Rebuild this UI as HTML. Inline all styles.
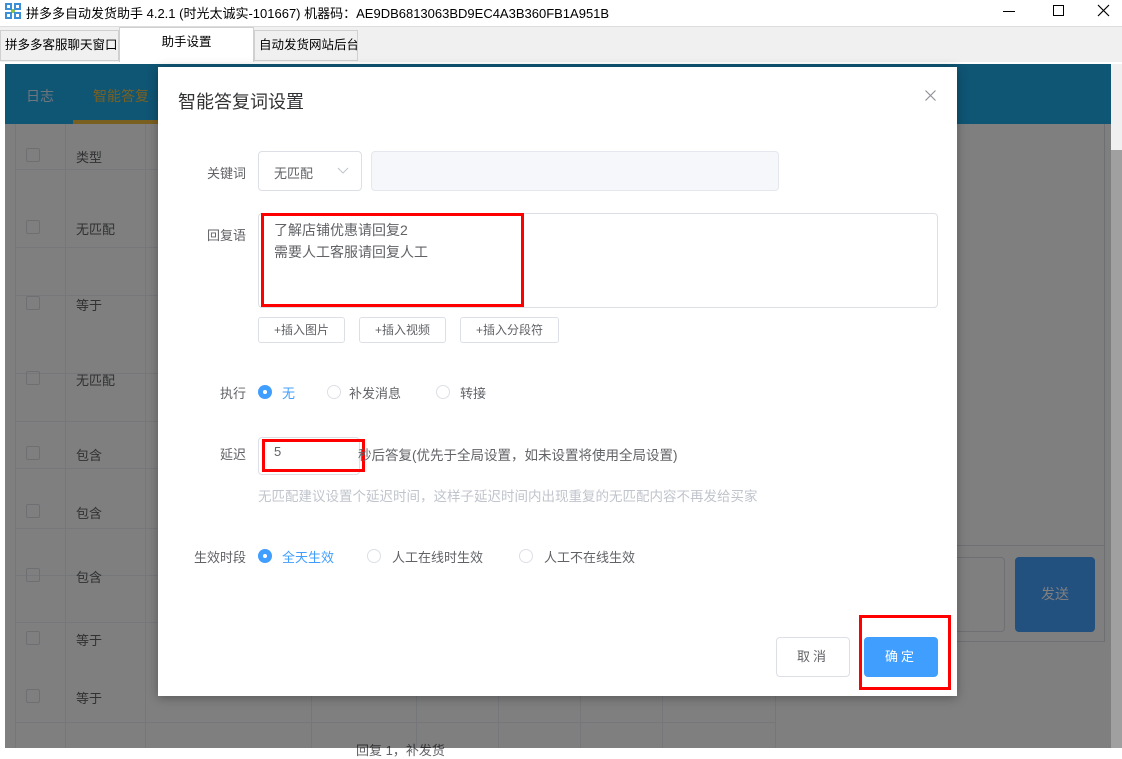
<!DOCTYPE html>
<html><head><meta charset="utf-8"><style>
*{margin:0;padding:0;box-sizing:border-box}
body{width:1122px;height:748px;overflow:hidden;position:relative;background:#fff;font-family:"Liberation Sans","Noto Sans CJK SC",sans-serif;font-size:13px;color:#606266}
.a{position:absolute}
.title{left:26px;top:3px;font-size:13px;color:#000}
.tab{top:30px;height:31px;border:1px solid #d0d0d0;background:#f0f0f0;font-size:12.5px;color:#000;line-height:29px;padding:0 4px;white-space:nowrap;overflow:hidden}
.vl{width:1px;background:#ebeef5;top:124px;height:624px}
.hl{height:1px;background:#ebeef5;left:15px;width:760px}
.cell{color:#606266;font-size:13px}
.cb{width:14px;height:14px;border:1px solid #dcdfe6;border-radius:2px;left:26px}
.lab{color:#606266;font-size:13px;text-align:right;width:88px;left:0}
.inp{border:1px solid #dcdfe6;border-radius:4px;background:#fff}
.btn{border:1px solid #dcdfe6;border-radius:3px;font-size:12px;color:#606266;text-align:center;line-height:24px;height:26px}
.rd{width:14px;height:14px;border:1px solid #dcdfe6;border-radius:50%}
.rdo{width:14px;height:14px;border-radius:50%;background:#409eff}
.rdo:after{content:"";position:absolute;left:5px;top:5px;width:4px;height:4px;background:#fff;border-radius:50%}
.red{border:3px solid #f00}
</style></head><body>
<svg class="a" style="left:5px;top:3px" width="16" height="16" viewBox="0 0 16 16"><g fill="none" stroke="#3a8fd8" stroke-width="2"><rect x="1" y="1" width="5" height="5"/><rect x="10" y="1" width="5" height="5"/><rect x="1" y="10" width="5" height="5"/><rect x="10" y="10" width="5" height="5"/></g><path d="M6 8h4M8 6v4" stroke="#8bc34a" stroke-width="2"/></svg>
<div class="a title">拼多多自动发货助手 4.2.1 (时光太诚实-101667) 机器码：AE9DB6813063BD9EC4A3B360FB1A951B</div>
<div class="a" style="left:1003px;top:11px;width:12px;height:1px;background:#000"></div>
<div class="a" style="left:1053px;top:5px;width:11px;height:11px;border:1px solid #000"></div>
<svg class="a" style="left:1097px;top:4px" width="13" height="13"><path d="M1 1L12 12M12 1L1 12" stroke="#000" stroke-width="1.2"/></svg>
<div class="a" style="left:0;top:26px;width:1122px;height:36px;background:#f0f0f0;border-top:1px solid #ddd"></div>
<div class="a tab" style="left:0;width:119px">拼多多客服聊天窗口</div>
<div class="a tab" style="left:119px;top:27px;height:35px;width:135px;background:#fff;border-bottom:none;text-align:center">助手设置</div>
<div class="a tab" style="left:254px;width:104px">自动发货网站后台</div>
<div class="a" style="left:5px;top:64px;width:1106px;height:60px;background:#1eaae8"></div>
<div class="a" style="left:1111px;top:64px;width:11px;height:86px;background:#f0f0f0"></div>
<div class="a" style="left:1111px;top:150px;width:11px;height:598px;background:#a0a0a0"></div>
<div class="a" style="left:26px;top:86px;color:#dfeefa;font-size:14px">日志</div>
<div class="a" style="left:93px;top:86px;color:#f5c040;font-size:14px">智能答复</div>
<div class="a" style="left:73px;top:120px;width:90px;height:4px;background:#f5c040"></div>
<div class="a vl" style="left:15px"></div><div class="a vl" style="left:65px"></div><div class="a vl" style="left:145px"></div>
<div class="a vl" style="left:311px;top:640px;height:108px"></div><div class="a vl" style="left:416px;top:640px;height:108px"></div><div class="a vl" style="left:498px;top:640px;height:108px"></div><div class="a vl" style="left:580px;top:640px;height:108px"></div><div class="a vl" style="left:662px;top:640px;height:108px"></div><div class="a vl" style="left:775px;top:640px;height:108px"></div>
<div class="a hl" style="top:169px"></div><div class="a hl" style="top:247px"></div><div class="a hl" style="top:295px"></div><div class="a hl" style="top:373px;"></div><div class="a hl" style="top:421px"></div><div class="a hl" style="top:468px"></div><div class="a hl" style="top:528px"></div><div class="a hl" style="top:575px"></div><div class="a hl" style="top:622px"></div><div class="a hl" style="top:722px"></div>
<div class="a cb" style="top:148px"></div><div class="a cell" style="left:76px;top:147px">类型</div>
<div class="a cb" style="top:220px"></div><div class="a cell" style="left:76px;top:219px">无匹配</div>
<div class="a cb" style="top:296px"></div><div class="a cell" style="left:76px;top:295px">等于</div>
<div class="a cb" style="top:371px"></div><div class="a cell" style="left:76px;top:370px">无匹配</div>
<div class="a cb" style="top:446px"></div><div class="a cell" style="left:76px;top:445px">包含</div>
<div class="a cb" style="top:504px"></div><div class="a cell" style="left:76px;top:503px">包含</div>
<div class="a cb" style="top:568px"></div><div class="a cell" style="left:76px;top:567px">包含</div>
<div class="a cb" style="top:631px"></div><div class="a cell" style="left:76px;top:630px">等于</div>
<div class="a cb" style="top:689px"></div><div class="a cell" style="left:76px;top:688px">等于</div>
<div class="a cell" style="left:356px;top:740px">回复 1，补发货</div>
<div class="a" style="left:775px;top:545px;width:330px;height:1px;background:#dcdfe6"></div>
<div class="a" style="left:1104px;top:124px;width:1px;height:518px;background:#dcdfe6"></div>
<div class="a" style="left:775px;top:641px;width:330px;height:1px;background:#dcdfe6"></div>
<div class="a" style="left:775px;top:557px;width:230px;height:75px;border:1px solid #dcdfe6;border-radius:4px"></div>
<div class="a" style="left:1015px;top:557px;width:80px;height:75px;background:#44a0fe;border-radius:4px;color:#fff;font-size:14px;text-align:center;line-height:75px">发送</div>
<div class="a" style="left:5px;top:64px;width:1106px;height:684px;background:rgba(0,0,0,0.5)"></div>

<div class="a" style="left:158px;top:67px;width:799px;height:629px;background:#fff;box-shadow:0 2px 10px rgba(0,0,0,.3)">
<div class="a" style="left:20px;top:21px;font-size:18px;color:#303133">智能答复词设置</div>
<svg class="a" style="left:767px;top:23px" width="11" height="11"><path d="M0.5 0.5L10.5 10.5M10.5 0.5L0.5 10.5" stroke="#909399" stroke-width="1.2"/></svg>
<div class="a lab" style="top:96px">关键词</div>
<div class="a inp" style="left:100px;top:84px;width:104px;height:40px"><span class="a" style="left:15px;top:11px;color:#606266">无匹配</span><svg class="a" style="left:78px;top:15px" width="12" height="8"><path d="M1 1L6 6L11 1" fill="none" stroke="#c0c4cc"/></svg></div>
<div class="a inp" style="left:213px;top:84px;width:408px;height:40px;background:#f5f7fa;border-color:#e4e7ed"></div>
<div class="a lab" style="top:158px">回复语</div>
<div class="a inp" style="left:100px;top:146px;width:680px;height:95px;border-radius:4px"></div>
<div class="a" style="left:116px;top:152px;color:#606266;font-size:14px;line-height:22px">了解店铺优惠请回复2<br>需要人工客服请回复人工</div>
<div class="a red" style="left:103px;top:146px;width:263px;height:94px"></div>
<div class="a btn" style="left:100px;top:250px;width:87px">+插入图片</div>
<div class="a btn" style="left:201px;top:250px;width:87px">+插入视频</div>
<div class="a btn" style="left:302px;top:250px;width:99px">+插入分段符</div>
<div class="a lab" style="top:316px">执行</div>
<div class="a rdo" style="left:100px;top:318px"></div><div class="a" style="left:124px;top:316px;color:#409eff">无</div>
<div class="a rd" style="left:169px;top:318px"></div><div class="a" style="left:191px;top:316px">补发消息</div>
<div class="a rd" style="left:278px;top:318px"></div><div class="a" style="left:302px;top:316px">转接</div>
<div class="a lab" style="top:377px">延迟</div>
<div class="a inp" style="left:100px;top:370px;width:102px;height:38px"></div>
<div class="a" style="left:116px;top:377px;color:#606266">5</div>
<div class="a red" style="left:104px;top:372px;width:103px;height:33px"></div>
<div class="a" style="left:200px;top:377px;color:#606266;font-size:13.5px">秒后答复(优先于全局设置，如未设置将使用全局设置)</div>
<div class="a" style="left:100px;top:418px;color:#c0c4cc;font-size:13.5px">无匹配建议设置个延迟时间，这样子延迟时间内出现重复的无匹配内容不再发给买家</div>
<div class="a lab" style="top:480px">生效时段</div>
<div class="a rdo" style="left:100px;top:482px"></div><div class="a" style="left:124px;top:480px;color:#409eff">全天生效</div>
<div class="a rd" style="left:209px;top:482px"></div><div class="a" style="left:234px;top:480px">人工在线时生效</div>
<div class="a rd" style="left:361px;top:482px"></div><div class="a" style="left:386px;top:480px">人工不在线生效</div>
<div class="a" style="left:618px;top:570px;width:74px;height:40px;border:1px solid #dcdfe6;border-radius:4px;text-align:center;line-height:38px;color:#606266;letter-spacing:3px">取消</div>
<div class="a" style="left:706px;top:570px;width:74px;height:40px;background:#409eff;border-radius:4px;text-align:center;line-height:40px;color:#fff;letter-spacing:3px">确定</div>
<div class="a red" style="left:701px;top:548px;width:92px;height:75px"></div>
</div>
</body></html>
